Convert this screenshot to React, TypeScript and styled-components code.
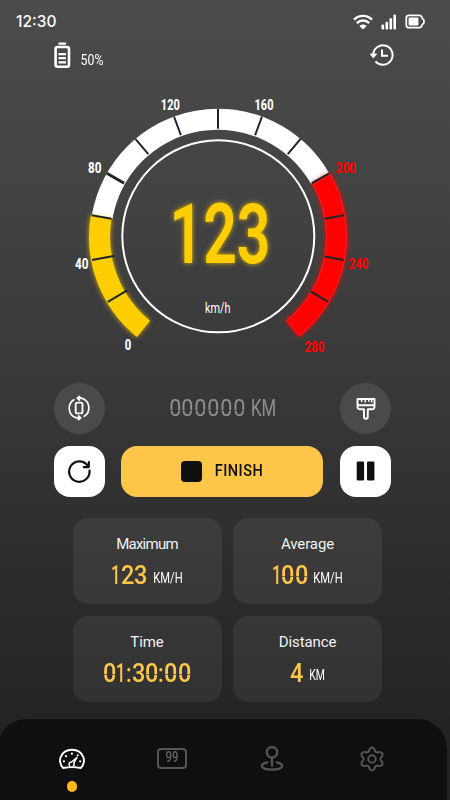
import React from "react";
import styled, { createGlobalStyle } from "styled-components";

const Global = createGlobalStyle`
  * { box-sizing: border-box; }
  body { margin: 0; background: #252525; }
  button { border: 0; padding: 0; font: inherit; color: inherit; }
  svg { display: block; flex: none; }
`;

const Screen = styled.main`
  width: 450px;
  height: 800px;
  overflow: hidden;
  display: flex;
  flex-direction: column;
  background: linear-gradient(#4b4b4b 0, #434343 190px, #393939 370px, #2d2d2d 560px, #232323 730px);
  color: #fff;
  font-family: Roboto, sans-serif;
`;

const StatusBar = styled.header`
  height: 42px;
  padding: 1px 24px 0 16px;
  display: flex;
  align-items: center;
  justify-content: space-between;
`;

const Clock = styled.time`
  font: 450 15.5px Inter, sans-serif;
`;

const StatusIcons = styled.div`
  display: flex;
  align-items: center;
  gap: 8px;
`;

const Tools = styled.div`
  height: 28px;
  padding: 0 55px 0 54px;
  display: flex;
  justify-content: space-between;
  align-items: flex-start;
`;

const BatteryInfo = styled.div`
  display: flex;
  align-items: flex-start;
  gap: 9px;
`;

const LcdLine = styled.span<{ $size: number; $color: string; $weight: number }>`
  height: ${p => Math.round(p.$size)}px;
  display: flex;
  flex: none;
  font: ${p => p.$weight} ${p => p.$size}px/1 Roboto, sans-serif;
  color: ${p => p.$color};
`;

const LcdCell = styled.span<{ $w: number; $scale: number; $cut: boolean }>`
  width: ${p => p.$w}px;
  flex: none;
  display: flex;
  justify-content: center;
  transform: scaleX(${p => p.$scale});
  ${p => p.$cut && "mask-image: linear-gradient(#000 13px, rgba(0,0,0,0.35) 13px, rgba(0,0,0,0.35) 14px, #000 14px); mask-clip: no-clip;"}
`;

const LcdLabel = styled.span<{ $w: number; $size: number; $scale: number; $color?: string; $weight?: number; $gap?: number; $top?: number }>`
  width: ${p => p.$w}px;
  height: ${p => Math.round(p.$size)}px;
  margin-top: ${p => p.$top ?? 0}px;
  display: flex;
  flex: none;
  align-items: center;
  justify-content: center;
  white-space: pre;
  font: ${p => p.$weight ?? 400} ${p => p.$size}px/1 Roboto, sans-serif;
  letter-spacing: ${p => p.$gap ?? 0}px;
  color: ${p => p.$color ?? "#fff"};
  transform: scaleX(${p => p.$scale});
`;

const Odometer = styled.div`
  display: flex;
  gap: 5px;
`;

const GaugeArea = styled.section`
  height: 300px;
  display: flex;
`;

const ControlRow = styled.div<{ $mt: number }>`
  margin: ${p => p.$mt}px 59px 0 53.5px;
  height: 52px;
  display: flex;
  align-items: center;
  justify-content: space-between;
`;

const RoundButton = styled.button`
  width: 51px;
  height: 51px;
  border-radius: 50%;
  background: #4a4a4a;
  display: grid;
  place-items: center;
`;

const ActionButton = styled.button<{ $wide?: boolean }>`
  width: ${p => (p.$wide ? 202 : 51)}px;
  height: 51px;
  border-radius: 16px;
  background: ${p => (p.$wide ? "#ffc64a" : "#fff")};
  display: flex;
  align-items: center;
  justify-content: center;
  gap: 12px;
`;

const StopMark = styled.i`
  width: 21px;
  height: 21px;
  border-radius: 4px;
  background: #0f0f0f;
`;

const Stats = styled.section`
  margin: 21px 67.5px 0 72.5px;
  display: grid;
  grid-template-columns: 149px 149px;
  grid-auto-rows: 86px;
  gap: 11.5px;
`;

const Card = styled.article`
  border-radius: 15px;
  background: rgba(255, 255, 255, 0.063);
  display: flex;
  flex-direction: column;
  align-items: center;
  padding-top: 17px;
`;

const CardTitle = styled.h2<{ $tight?: boolean }>`
  margin: 0;
  font: 400 15px/18px Roboto, sans-serif;
  letter-spacing: ${p => (p.$tight ? -0.75 : -0.1)}px;
  color: #f2f2f2;
`;

const CardValue = styled.div`
  margin-top: 10px;
  height: 25px;
  display: flex;
  align-items: flex-start;
  gap: 5px;
`;

const Nav = styled.nav`
  margin: auto 3px 0 -3px;
  height: 81px;
  padding: 0 25px;
  border-radius: 30px 30px 0 0;
  background: #0f0f0f;
  display: grid;
  grid-template-columns: repeat(4, 100px);
`;

const NavItem = styled.a<{ $active?: boolean }>`
  color: ${p => (p.$active ? "#fff" : "#555")};
  display: flex;
  flex-direction: column;
  align-items: center;
  padding-top: 25px;
  gap: 6px;
`;

const ActiveDot = styled.i`
  flex: none;
  width: 10.5px;
  height: 10.5px;
  border-radius: 50%;
  background: #ffb915;
`;

type DigitsProps = { text: string; pitch: number; size: number; color: string; weight?: number };

function Digits({ text, pitch, size, color, weight = 500 }: DigitsProps) {
  const ratio = (c: string) => (c === "1" ? 0.7 : c === ":" ? 0.44 : 1);
  return (
    <LcdLine $size={size} $color={color} $weight={weight}>
      {[...text].map((c, i) => (
        <LcdCell key={i} $w={pitch * ratio(c)} $scale={c === "1" ? 0.66 : c === ":" ? 0.86 : 0.94} $cut={c === "0"}>
          {c}
        </LcdCell>
      ))}
    </LcdLine>
  );
}

const CX = 218;
const CY = 236.7 - 70;
const STEP = 20.1;

const polar = (r: number, deg: number) => {
  const a = (deg * Math.PI) / 180;
  return [CX + r * Math.sin(a), CY - r * Math.cos(a)] as const;
};

const band = (r0: number, r1: number, from: number, to: number) => {
  const [ax, ay] = polar(r1, from);
  const [bx, by] = polar(r1, to);
  const [cx, cy] = polar(r0, to);
  const [dx, dy] = polar(r0, from);
  return `M${ax} ${ay}A${r1} ${r1} 0 0 1 ${bx} ${by}L${cx} ${cy}A${r0} ${r0} 0 0 0 ${dx} ${dy}Z`;
};

const labels: [string, number, number, number][] = [
  ["0", 128, 350, 6.5],
  ["40", 81.8, 269, 13.5],
  ["80", 94.7, 172.5, 13.5],
  ["120", 170.3, 110, 19],
  ["160", 264, 110, 19],
  ["200", 346, 172.7, 20],
  ["240", 358.5, 269, 20],
  ["280", 314.5, 352, 20],
];

function Gauge() {
  return (
    <svg width="450" height="300" viewBox="0 0 450 300">
      <defs>
        <filter id="amber" x="-20%" y="-20%" width="140%" height="140%">
          <feDropShadow dx="0" dy="0" stdDeviation="2.6" floodColor="#ffcf00" floodOpacity="0.8" />
        </filter>
        <filter id="red" x="-20%" y="-20%" width="140%" height="140%">
          <feDropShadow dx="0" dy="0" stdDeviation="2.6" floodColor="#ff0000" floodOpacity="0.9" />
        </filter>
      </defs>
      <path d={band(107, 128, -80.4, 60.4)} fill="#fff" />
      <path d={band(108, 129, -141, -80.4)} fill="#ffce00" filter="url(#amber)" />
      <path d={band(108, 129, 60.4, 141)} fill="#f00" filter="url(#red)" />
      <path d={band(108.5, 128.5, 61, 140.6)} fill="none" stroke="#ff5040" strokeOpacity="0.45" strokeWidth="0.9" />
      {Array.from({ length: 13 }, (_, i) => i - 6).map(i => {
        const [x1, y1] = polar(Math.abs(i) > 4 && i < 0 ? 105 : 108, i * STEP);
        const [x2, y2] = polar(128, i * STEP);
        return <line key={i} x1={x1} y1={y1} x2={x2} y2={y2} stroke="#1d252c" strokeWidth={i === -3 ? 3 : 2} />;
      })}
      <circle cx="218.3" cy="166.3" r="96" fill="none" stroke="#fff" strokeWidth="2" />
      {labels.map(([t, x, y, w]) => (
        <text
          key={t}
          x={x}
          y={y - 70}
          textAnchor="middle"
          textLength={w}
          lengthAdjust="spacingAndGlyphs"
          fontFamily="Roboto"
          fontWeight="800"
          fontSize="15"
          fill={+t >= 200 ? "#f00" : "#fff"}
        >
          {t}
        </text>
      ))}
      <text
        x="220" y="192.7" textAnchor="middle" textLength="101" lengthAdjust="spacingAndGlyphs"
        fontFamily="Roboto" fontWeight="600" fontSize="83.5" fill="#ffce00" filter="url(#amber)"
      >
        123
      </text>
      <text
        x="217.7" y="243" textAnchor="middle" textLength="25.5" lengthAdjust="spacingAndGlyphs"
        fontFamily="Roboto" fontWeight="400" fontSize="15.5" fill="#fff"
      >
        km/h
      </text>
    </svg>
  );
}

const WifiIcon = () => (
  <svg width="20" height="16" viewBox="0 0 20 16" fill="none" stroke="#fff" strokeWidth="2.4">
    <path d="M1 5.600C6 .6 14 .6 19 5.600M3.800 9.200c3.500-3.600 8.900-3.600 12.400 0" />
    <path d="M6.400 11.900c2-2 5.200-2 7.200 0L10 15.500Z" fill="#fff" stroke="none" />
  </svg>
);

const SignalIcon = () => (
  <svg width="16" height="16" viewBox="0 0 16 16" fill="#fff">
    <rect x="0.500" y="10.500" width="2.600" height="5" rx="1" />
    <rect x="4.500" y="7.800" width="2.600" height="7.700" rx="1" />
    <rect x="8.500" y="4.300" width="2.600" height="11.200" rx="1" />
    <rect x="12.400" y="0.500" width="2.600" height="15" rx="1" />
  </svg>
);

const PhoneBatteryIcon = () => (
  <svg width="21" height="15" viewBox="0 0 21 15">
    <path d="M4 1.300h10.200q2.600 0 3 3l1.700 1.700v3l-1.700 1.700q-.4 3-3 3H4q-2.700 0-2.700-2.700V4Q1.300 1.300 4 1.300Z" fill="none" stroke="#fff" strokeWidth="1.700" />
    <rect x="3.600" y="3.600" width="9.800" height="7.800" rx="1" fill="#fff" />
  </svg>
);

const BatteryIcon = () => (
  <svg width="17" height="27" viewBox="0 0 17 27" fill="none" stroke="#fff">
    <path d="M5.500 1.600h5.500" strokeWidth="2.400" strokeLinecap="round" />
    <rect x="1.600" y="5" width="13.400" height="19.800" rx="2" strokeWidth="2.600" />
    <path d="M4.500 12.200h7.500M4.500 16.200h7.500M4.500 20.300h7.500" strokeWidth="2.300" />
  </svg>
);

const HistoryIcon = () => (
  <svg width="25" height="24" viewBox="0 0 25 24" fill="none" stroke="#fff" strokeWidth="2">
    <path d="M3.200 12.500A9.700 9.700 0 1 1 5.500 19.300" />
    <path d="M.9 12.300h5.200L3.300 15.300Z" fill="#fff" strokeWidth="1.500" strokeLinejoin="round" />
    <path d="M12 7.500v6.300h6" />
  </svg>
);

const RotateIcon = () => (
  <svg width="24" height="26" viewBox="0 0 24 26" fill="none" stroke="#fff" strokeWidth="1.700" strokeLinecap="round" strokeLinejoin="round">
    <path d="M6.800 4.800A10 10 0 0 0 8.800 22.600l3.200.7M17.200 21.300A10 10 0 0 0 15.200 3.400L12 2.700" />
    <path d="M12.400 1.300v3.800L10.200 3.200ZM11.600 20.900v3.800l2.200-1.900Z" fill="#fff" />
    <rect x="8.700" y="7.600" width="6.800" height="10.800" rx="1.600" strokeWidth="1.900" />
  </svg>
);

const BrushIcon = () => (
  <svg width="20" height="23" viewBox="0 0 20 23" fill="none" stroke="#fff" strokeWidth="1.900" strokeLinejoin="round">
    <path d="M1.500 2h17v7.700q0 2.500-2.500 2.500h-4.200v7.600a1.900 1.900 0 0 1-3.800 0v-7.600H4q-2.500 0-2.500-2.500ZM1.500 8.300h17" />
    <path d="M5.600 2v3M9.200 2v3.400M12.700 2v2.700M15.600 2v3.400" strokeWidth="1.500" />
  </svg>
);

const ReloadIcon = () => (
  <svg width="25" height="25" viewBox="0 0 25 25" fill="none" stroke="#0f0f0f" strokeWidth="2.200" strokeLinecap="round" strokeLinejoin="round">
    <path d="M22.500 11.600A10.200 10.200 0 1 1 20.400 6.300" />
    <path d="M21.800 3v5.100h-5.100" />
  </svg>
);

const PauseIcon = () => (
  <svg width="19" height="20" viewBox="0 0 19 20" fill="#0f0f0f">
    <rect x="0.700" y="0.500" width="7.400" height="19" rx="1.200" />
    <rect x="11" y="0.500" width="7.400" height="19" rx="1.200" />
  </svg>
);

const SpeedIcon = () => (
  <svg width="26" height="31" viewBox="0 0 26 31" fill="none" stroke="currentColor" strokeWidth="1.900">
    <path d="M4.200 24C.6 21.200.7 15.600 1.700 13 5.500 3.400 20.500 3.400 24.300 13c1 2.600 1.100 8.200-2.500 11-5.800-1.200-11.800-1.200-17.600 0Z" strokeLinejoin="round" />
    <path d="m18.200 13.200-5.600 4.800a2.400 2.400 0 0 0-1.600 4.300M14 22.300a2.400 2.400 0 0 0 .8-3.400l3.400-5.700" strokeWidth="1.500" />
    <g fill="currentColor" stroke="none">
      <circle cx="4.900" cy="17.300" r="1.100" /><circle cx="7" cy="12.200" r="1.100" />
      <circle cx="12.900" cy="9.700" r="1.100" /><circle cx="18.700" cy="11.300" r="1.100" /><circle cx="21.200" cy="17.300" r="1.100" />
    </g>
  </svg>
);

const DigitalBox = styled.span`
  margin-top: 4px;
  width: 30px;
  height: 21px;
  border: 2px solid #555;
  border-radius: 4px;
  display: grid;
  place-items: center;
`;

const MapPinIcon = () => (
  <svg width="24" height="29" viewBox="0 0 24 29" fill="none" stroke="currentColor" strokeWidth="2.300" strokeLinecap="round">
    <circle cx="12" cy="8.300" r="5.300" />
    <path d="M12 13.800v7.700M7.300 18.300c-8 1.500-8.200 7.200 4.700 7.400 12.900-.2 12.700-5.900 4.700-7.400" />
  </svg>
);

const GearIcon = () => (
  <svg width="26" height="29" viewBox="0 0 26 29" fill="none" stroke="currentColor" strokeWidth="2" strokeLinejoin="round">
    <circle cx="13" cy="15" r="3.700" />
    <path d="M10.500 5.500Q13 1.500 15.500 5.500C16 8.300 17.500 9 20 7.900Q24.700 8 23.100 12.200C20.800 14 20.800 16 23.100 17.800Q24.700 22 20 22.100C17.500 21 16 21.700 15.500 24.500Q13 28.500 10.500 24.500C10 21.700 8.500 21 6 22.100Q1.300 22 2.900 17.800C5.200 16 5.200 14 2.900 12.200Q1.300 8 6 7.900C8.500 9 10 8.300 10.500 5.500Z" />
  </svg>
);

const AMBER = "#ffc64a";

export default function App() {
  return (
    <Screen>
      <Global />
      <StatusBar>
        <Clock>12:30</Clock>
        <StatusIcons>
          <WifiIcon />
          <SignalIcon />
          <PhoneBatteryIcon />
        </StatusIcons>
      </StatusBar>
      <Tools>
        <BatteryInfo>
          <BatteryIcon />
          <LcdLabel $w={24} $size={14} $scale={0.88} $top={10.5}>50%</LcdLabel>
        </BatteryInfo>
        <HistoryIcon />
      </Tools>
      <GaugeArea><Gauge /></GaugeArea>
      <ControlRow $mt={12}>
        <RoundButton aria-label="Rotate"><RotateIcon /></RoundButton>
        <Odometer>
          <Digits text="000000" pitch={12.9} size={23} weight={400} color="#8e8e8e" />
          <LcdLabel $w={25} $size={23} $scale={0.73} $color="#8e8e8e">KM</LcdLabel>
        </Odometer>
        <RoundButton aria-label="Theme"><BrushIcon /></RoundButton>
      </ControlRow>
      <ControlRow $mt={11}>
        <ActionButton aria-label="Reset"><ReloadIcon /></ActionButton>
        <ActionButton $wide>
          <StopMark />
          <LcdLabel $w={50} $size={16.5} $scale={0.88} $gap={0.5} $weight={500} $color="#0f0f0f">FINISH</LcdLabel>
        </ActionButton>
        <ActionButton aria-label="Pause"><PauseIcon /></ActionButton>
      </ControlRow>
      <Stats>
        <Card>
          <CardTitle $tight>Maximum</CardTitle>
          <CardValue>
            <Digits text="123" pitch={13.5} size={25} color={AMBER} />
            <LcdLabel $w={30} $size={14} $scale={0.8} $top={7.5}>KM/H</LcdLabel>
          </CardValue>
        </Card>
        <Card>
          <CardTitle>Average</CardTitle>
          <CardValue>
            <Digits text="100" pitch={13.5} size={25} color={AMBER} />
            <LcdLabel $w={30} $size={14} $scale={0.8} $top={7.5}>KM/H</LcdLabel>
          </CardValue>
        </Card>
        <Card>
          <CardTitle>Time</CardTitle>
          <CardValue>
            <Digits text="01:30:00" pitch={13.4} size={25} color={AMBER} />
          </CardValue>
        </Card>
        <Card>
          <CardTitle>Distance</CardTitle>
          <CardValue>
            <Digits text="4" pitch={13.6} size={25} color={AMBER} />
            <LcdLabel $w={16} $size={14} $scale={0.75} $top={7.5}>KM</LcdLabel>
          </CardValue>
        </Card>
      </Stats>
      <Nav>
        <NavItem $active aria-label="Speedometer"><SpeedIcon /><ActiveDot /></NavItem>
        <NavItem aria-label="Digital"><DigitalBox><LcdLabel $w={14} $size={14.5} $scale={0.78} $weight={500} $color="#666">99</LcdLabel></DigitalBox></NavItem>
        <NavItem aria-label="Map"><MapPinIcon /></NavItem>
        <NavItem aria-label="Settings"><GearIcon /></NavItem>
      </Nav>
    </Screen>
  );
}
